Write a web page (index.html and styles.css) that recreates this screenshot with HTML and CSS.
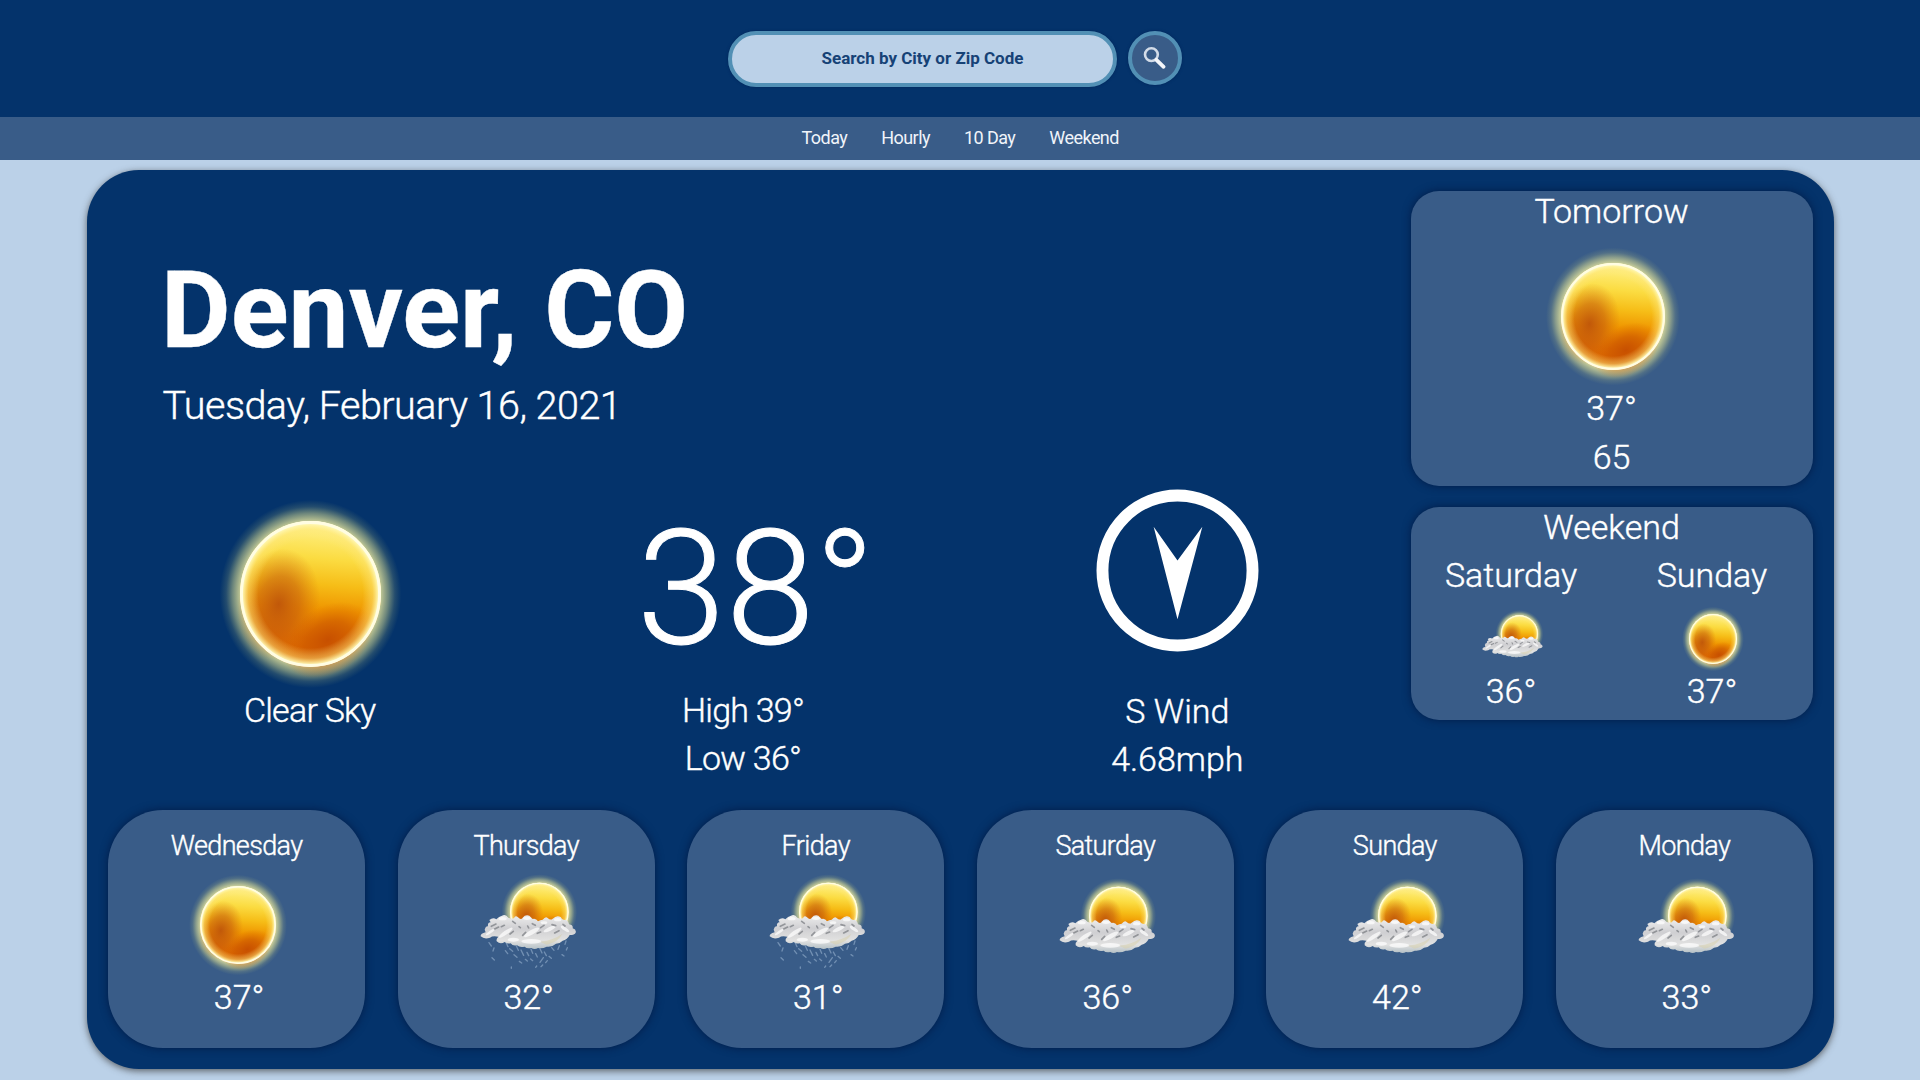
FILE: index.html
```html
<!DOCTYPE html>
<html lang="en">
<head>
<meta charset="utf-8">
<title>Weather - Denver, CO</title>
<link rel="stylesheet" href="styles.css">
</head>
<body>
<svg class="defs" aria-hidden="true">
  <defs>
    <linearGradient id="sunBase" x1=".54" y1="0" x2=".46" y2="1">
      <stop offset="0" stop-color="#fff38d"/>
      <stop offset=".25" stop-color="#fbdc42"/>
      <stop offset=".43" stop-color="#f6bd17"/>
      <stop offset=".6" stop-color="#ef9500"/>
      <stop offset=".8" stop-color="#df6d00"/>
      <stop offset="1" stop-color="#d65d00"/>
    </linearGradient>
    <radialGradient id="sunSpot"><stop offset="0" stop-color="#b94d0b" stop-opacity=".85"/><stop offset=".5" stop-color="#c3580d" stop-opacity=".55"/><stop offset="1" stop-color="#d06a0c" stop-opacity="0"/></radialGradient>
    <radialGradient id="sunLow"><stop offset="0" stop-color="#c64e00" stop-opacity=".95"/><stop offset=".5" stop-color="#cb5600" stop-opacity=".6"/><stop offset="1" stop-color="#d96600" stop-opacity="0"/></radialGradient>
    <radialGradient id="sunRim"><stop offset=".74" stop-color="#ffe982" stop-opacity="0"/><stop offset=".88" stop-color="#ffe982" stop-opacity=".45"/><stop offset=".95" stop-color="#fff6ae" stop-opacity=".9"/><stop offset="1" stop-color="#fffff0"/></radialGradient>
    <radialGradient id="sunGlow"><stop offset=".78" stop-color="#f7f2a0" stop-opacity=".75"/><stop offset=".86" stop-color="#eceb91" stop-opacity=".45"/><stop offset=".93" stop-color="#d9dd80" stop-opacity=".15"/><stop offset="1" stop-color="#c5d070" stop-opacity="0"/></radialGradient>
    <linearGradient id="cloudFill" x1="0" y1="0" x2="0" y2="1"><stop offset="0" stop-color="#eeeeee"/><stop offset=".4" stop-color="#cfcfd2"/><stop offset=".75" stop-color="#e2e2e1"/><stop offset="1" stop-color="#b4c0c6"/></linearGradient>
    <filter id="soft" x="-10%" y="-10%" width="120%" height="120%"><feGaussianBlur stdDeviation="1.8"/></filter>
    <filter id="softer" x="-10%" y="-10%" width="120%" height="120%"><feGaussianBlur stdDeviation="2.2"/></filter>
    <symbol id="sun" viewBox="-73 -73 146 146" preserveAspectRatio="none" overflow="visible">
      <circle r="94" fill="url(#sunGlow)"/>
      <circle r="73" fill="url(#sunBase)"/>
      <ellipse cx="-33" cy="10" rx="42" ry="56" fill="url(#sunSpot)" transform="rotate(12 -33 10)"/>
      <ellipse cx="18" cy="46" rx="50" ry="34" fill="url(#sunLow)" transform="rotate(-28 18 46)"/>
      <circle r="73" fill="url(#sunRim)"/>
      <circle r="71.5" fill="none" stroke="#fffde2" stroke-width="3"/>
    </symbol>
    <symbol id="cloud" viewBox="0 0 420 360" overflow="visible">
      <clipPath id="sunTop"><path d="M80 0H400V215H330L310 245H150V190H80z"/></clipPath>
      <g clip-path="url(#sunTop)">
        <svg x="150" y="68" width="176" height="176" viewBox="-73 -73 146 146" overflow="visible"><use href="#sun" x="-73" y="-73" width="146" height="146"/></svg>
      </g>
      <g filter="url(#soft)">
        <path fill="url(#cloudFill)" d="M62 229Q61 221 77 217L74 209Q77 198 84 199Q82 188 92 187L88 180Q99 171 109 178Q117 169 126 167Q137 161 145 173Q157 178 162 174Q166 165 174 172Q183 181 188 173Q196 163 208 167L218 177Q228 174 234 184Q241 180 248 179Q257 167 263 174Q272 182 278 176Q290 164 302 171Q307 182 316 179Q326 183 327 193Q340 195 338 205Q350 209 347 218Q344 225 329 225Q322 239 308 242Q300 251 288 251Q274 263 260 260Q247 267 234 264Q224 270 214 264Q200 267 194 260Q180 264 171 256Q158 259 152 250Q140 252 134 246Q121 255 110 244Q108 236 115 230Q98 226 90 233Q73 239 62 229z"/>
      </g>
      <g filter="url(#softer)">
        <g fill="#fff" opacity=".7">
          <ellipse cx="128" cy="176" rx="12" ry="5"/><ellipse cx="201" cy="175" rx="12" ry="5"/><ellipse cx="293" cy="179" rx="11" ry="5"/>
          <ellipse cx="91" cy="216" rx="16" ry="4" transform="rotate(-35 91 216)"/><ellipse cx="137" cy="218" rx="25" ry="6" transform="rotate(-35 137 218)"/>
          <ellipse cx="160" cy="239" rx="17" ry="6"/><ellipse cx="215" cy="217" rx="26" ry="7" transform="rotate(-30 215 217)"/>
          <ellipse cx="269" cy="207" rx="20" ry="6" transform="rotate(-25 269 207)"/><ellipse cx="214" cy="244" rx="30" ry="7"/><ellipse cx="315" cy="207" rx="15" ry="5" transform="rotate(35 315 207)"/>
          <ellipse cx="252" cy="188" rx="10" ry="4"/>
        </g>
        <g fill="none" stroke="#6e7178" stroke-width="5" stroke-linecap="round" opacity=".65">
          <path d="M94 199L108 192M104 207L116 201M158 184L166 190M177 200L181 203M203 198L206 204M150 222L160 214M188 226L197 217M217 191L226 196M242 203L252 196M276 194L287 197M284 219L297 212M309 193L315 198M124 200L133 196M232 220L242 216"/>
        </g>
        <path d="M240 245Q282 240 307 221Q297 245 260 254z" fill="#d7cfaa" opacity=".5"/>
      </g>
    </symbol>
    <symbol id="rain" viewBox="0 0 420 360" overflow="visible">
      <use href="#cloud" width="420" height="360"/>
      <g fill="none" stroke="#a9c2dc" stroke-linecap="round" stroke-width="4" opacity=".5" filter="url(#soft)">
        <path d="M87 248L94 258M102 264L99 273M96 293L103 300M139 249L144 260M149 266L158 274M169 258L175 271M162 284L171 292M183 270L191 286M201 277L206 287M178 304L185 309M196 298L202 303M154 321V325M213 268L218 280M227 281L232 291M240 266L246 279M253 276L259 287M267 289L274 295M250 293L240 307M262 302L257 308M230 318L227 322M248 315L243 320M298 257L294 268M318 243L315 253M322 263L319 270M306 284L312 288M136 272L143 281M275 263L282 271M212 297L218 302"/>
      </g>
    </symbol>
  </defs>
</svg>

<header class="header">
  <form class="search">
    <input class="search-input" type="text" placeholder="Search by City or Zip Code" aria-label="Search">
    <button class="search-button" type="button" aria-label="Submit">
      <svg width="24" height="24" viewBox="0 0 24 24"><circle cx="8.4" cy="8.6" r="6.4" fill="none" stroke="#d3dce8" stroke-width="2.6"/><path d="M13.4 13.8L20.6 20.8" stroke="#f4f6fa" stroke-width="3.8" stroke-linecap="round"/></svg>
    </button>
  </form>
</header>
<nav class="nav"><a>Today</a><a>Hourly</a><a>10 Day</a><a>Weekend</a></nav>

<main class="panel">
  <div class="upper">
    <section class="today">
      <h1 class="city">Denver, CO</h1>
      <p class="date">Tuesday, February 16, 2021</p>
      <div class="stats">
        <div class="stat">
          <div class="visual sky"><svg width="141" height="146"><use href="#sun" width="141" height="146"/></svg></div>
          <p class="narrow">Clear Sky</p>
        </div>
        <div class="stat">
          <div class="visual temp">38°</div>
          <p class="narrow">High 39°</p>
          <p class="narrow">Low 36°</p>
        </div>
        <div class="stat wind">
          <div class="visual compass"><svg width="163" height="163" viewBox="0 0 164 164"><circle cx="82" cy="82" r="75.5" fill="none" stroke="#fff" stroke-width="12"/><path d="M58 38L82 72L107 38L82 131z" fill="#fff"/></svg></div>
          <p>S Wind</p>
          <p>4.68mph</p>
        </div>
      </div>
    </section>
    <aside class="side">
      <section class="card tomorrow">
        <h2>Tomorrow</h2>
        <svg class="tomorrow-sun" width="104" height="107"><use href="#sun" width="104" height="107"/></svg>
        <p>37°</p>
        <p>65</p>
      </section>
      <section class="card weekend">
        <h2>Weekend</h2>
        <div class="pair">
          <div class="half"><h3>Saturday</h3><div class="mini"><svg class="mini-cloud" width="89" height="76"><use href="#cloud" width="89" height="76"/></svg></div><p>36°</p></div>
          <div class="half"><h3>Sunday</h3><div class="mini"><svg width="48" height="50"><use href="#sun" width="48" height="50"/></svg></div><p>37°</p></div>
        </div>
      </section>
    </aside>
  </div>
  <div class="days">
    <section class="day"><h2>Wednesday</h2><div class="icon"><svg class="day-sun" width="76" height="78"><use href="#sun" width="76" height="78"/></svg></div><p>37°</p></section>
    <section class="day"><h2>Thursday</h2><div class="icon"><svg class="day-rain" width="140" height="120"><use href="#rain" width="140" height="120"/></svg></div><p>32°</p></section>
    <section class="day"><h2>Friday</h2><div class="icon"><svg class="day-rain" width="140" height="120"><use href="#rain" width="140" height="120"/></svg></div><p>31°</p></section>
    <section class="day"><h2>Saturday</h2><div class="icon"><svg class="day-cloud" width="140" height="120"><use href="#cloud" width="140" height="120"/></svg></div><p>36°</p></section>
    <section class="day"><h2>Sunday</h2><div class="icon"><svg class="day-cloud" width="140" height="120"><use href="#cloud" width="140" height="120"/></svg></div><p>42°</p></section>
    <section class="day"><h2>Monday</h2><div class="icon"><svg class="day-cloud" width="140" height="120"><use href="#cloud" width="140" height="120"/></svg></div><p>33°</p></section>
  </div>
</main>
</body>
</html>
```
FILE: styles.css
```css
* { box-sizing: border-box; margin: 0; }
body { height: 1080px; overflow: hidden; background: #bbd1e8; color: #fff; font-family: Roboto, "Liberation Sans", sans-serif; font-weight: 300; }
svg { display: block; overflow: visible; flex: none; }
.defs { position: absolute; width: 0; height: 0; }
.header { height: 117px; background: #04336b; padding: 31px 0 0 728px; }
.search { display: flex; gap: 11px; align-items: flex-start; }
.search-input { width: 389px; height: 56px; border: 4px solid #5290b5; border-radius: 28px; background: #bbd1e8; text-align: center; font: 700 17px/48px Roboto, sans-serif; outline: 0; padding: 0 0 2px; box-shadow: 0 0 3px #002459; }
.search-input::placeholder { color: #164276; opacity: 1; }
.search-button { width: 54px; height: 54px; border: 4px solid #5290b5; border-radius: 50%; background: #395c88; padding: 0; display: grid; place-items: center; box-shadow: 0 0 3px #002459; }
.nav { height: 42.5px; background: #395c88; display: flex; padding-left: 801.5px; gap: 34px; font-size: 18px; line-height: 42px; letter-spacing: -0.55px; font-weight: 400; color: #f0f4fa; white-space: nowrap; }
.panel { width: 1747px; height: 899px; margin: 10.5px 0 0 87px; padding: 21px; border-radius: 52px; background: #04336b; box-shadow: 0 2px 7px rgba(60, 60, 60, .75); -webkit-text-stroke: 0.4px #fff; }
.upper { display: flex; justify-content: space-between; height: 619px; }
.today { width: 1300px; margin-left: -14px; padding-top: 58px; }
.city { font-size: 107.2px; line-height: 124px; font-weight: 700; margin-left: 67px; }
.date { font-size: 39.5px; line-height: 46px; letter-spacing: -0.5px; margin: 10px 0 0 68.5px; }
.stats { display: grid; grid-template-columns: repeat(3, 1fr); margin-top: 60px; font-size: 34px; line-height: 48px; text-align: center; }
.visual { height: 197px; display: flex; justify-content: center; align-items: flex-start; }
.narrow { letter-spacing: -0.75px; padding-right: 2px; }
.sky { padding-top: 31.5px; }
.temp { font-size: 160px; line-height: 199px; padding-left: 24px; -webkit-text-stroke: 1px #fff; }
.compass { height: 198px; padding-left: 1px; }
.side { width: 402px; display: flex; flex-direction: column; gap: 21px; font-size: 34px; line-height: 48.5px; text-align: center; }
.side h2, .side h3 { font-size: 34px; font-weight: inherit; line-height: 40px; padding-right: 1px; }
.side p { padding-right: 1px; }
.card { background: #395c88; border-radius: 28px; box-shadow: 0 0 8px rgba(0, 20, 60, .75); }
.tomorrow { height: 295px; }
.tomorrow-sun { margin: 32px 0 14px 150px; }
.weekend { height: 213px; }
.pair { display: grid; grid-template-columns: 1fr 1fr; padding-top: 8px; }
.mini { height: 72px; padding-top: 19px; display: flex; justify-content: center; }
.mini-cloud { margin: -13px 0 0 3px; }
.days { display: grid; grid-template-columns: repeat(6, 1fr); gap: 32.3px; text-align: center; }
.day { height: 237.5px; background: #395c88; border-radius: 55px; padding-top: 20px; box-shadow: 0 0 8px rgba(0, 20, 60, .75); }
.day h2 { font-size: 27px; line-height: 32px; letter-spacing: -0.65px; font-weight: inherit; }
.icon { height: 115px; display: flex; justify-content: center; }
.day-sun { margin: 24px 0 0 3px; }
.day-rain { margin: -2px 0 0 7px; }
.day-cloud { margin: 2px 0 0 7px; }
.day p { font-size: 34px; line-height: 40px; padding-left: 5px; }
```
